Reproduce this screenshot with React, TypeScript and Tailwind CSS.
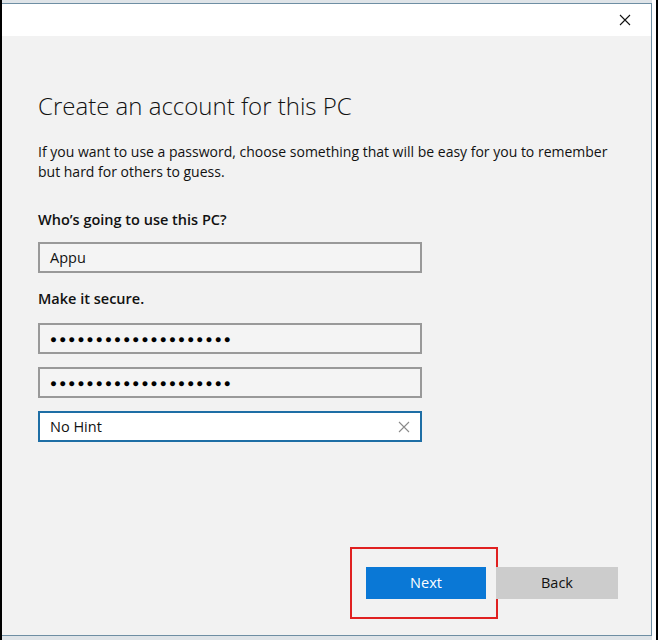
import { FC } from "react";

const font = { fontFamily: '"Open Sans", "Noto Sans", sans-serif' };

interface FieldProps {
  value: string;
  secret?: boolean;
}

const Field: FC<FieldProps> = ({ value, secret }) => {
  return (
    <div className="flex h-[31px] w-[384px] items-center border-2 border-[#999999] bg-[#f4f4f4] px-[10px]">
      {secret ? (
        <span className="text-[11.5px] tracking-[2.2px] text-black">
          {"●".repeat(20)}
        </span>
      ) : (
        <span className="text-[14.5px] text-[#111]">{value}</span>
      )}
    </div>
  );
};

const App: FC = () => {
  return (
    <div className="flex h-[640px] w-[658px] bg-[#f4f7f9]" style={font}>
      <div className="w-[2px] bg-black" />
      <div className="flex flex-1 flex-col">
        <div className="h-[3px] bg-[#dfe4e8]" />
        <div className="flex h-[633px] flex-col border-r border-t border-b border-[#6e8ea3]">
          <div className="flex h-[32px] items-center justify-end bg-white pr-[20px]">
            <svg width="12" height="12" viewBox="0 0 12 12">
              <path d="M1 1 L11 11 M11 1 L1 11" stroke="#111" strokeWidth="1.1" />
            </svg>
          </div>
          <div className="flex flex-1 flex-col bg-[#f2f2f2] pl-[36px]">
            <h1 className="mt-[55px] text-[24px] font-light leading-[30px] text-[#111]">
              Create an account for this PC
            </h1>
            <p className="mt-[21px] text-[14px] leading-[20px] text-[#111]">
              If you want to use a password, choose something that will be easy for you to remember
              <br />
              but hard for others to guess.
            </p>
            <div className="mt-[28px] text-[14.5px] font-semibold leading-[20px] text-[#111]">
              Who’s going to use this PC?
            </div>
            <div className="mt-[12px]">
              <Field value="Appu" />
            </div>
            <div className="mt-[16px] text-[14.5px] font-semibold leading-[20px] text-[#111]">
              Make it secure.
            </div>
            <div className="mt-[14px] flex flex-col gap-[13px]">
              <Field value="" secret />
              <Field value="" secret />
              <div className="flex h-[31px] w-[384px] items-center justify-between border-2 border-[#1e6ea5] bg-white pl-[10px] pr-[10px]">
                <span className="text-[14.5px] text-[#111]">No Hint</span>
                <svg width="12" height="12" viewBox="0 0 12 12">
                  <path d="M1 1 L11 11 M11 1 L1 11" stroke="#8a8a8a" strokeWidth="1.1" />
                </svg>
              </div>
            </div>
            <div className="mt-auto mb-[16px] flex items-center self-end pr-[33px]">
              <div className="flex h-[72px] w-[148px] items-center border-2 border-[#e02020] pl-[14px]">
                <div className="flex h-[32px] w-[120px] items-center justify-center bg-[#0a78d6] text-[14.5px] text-white">
                  Next
                </div>
              </div>
              <div className="-ml-[2px] flex h-[32px] w-[122px] items-center justify-center bg-[#cccccc] text-[14.5px] text-[#111]">
                Back
              </div>
            </div>
          </div>
        </div>
        <div className="flex-1 bg-[#dfe4e8]" />
      </div>
      <div className="flex w-[6px]">
        <div className="w-[4px] bg-white" />
        <div className="w-[2px] bg-black" />
      </div>
    </div>
  );
};

export default App;
